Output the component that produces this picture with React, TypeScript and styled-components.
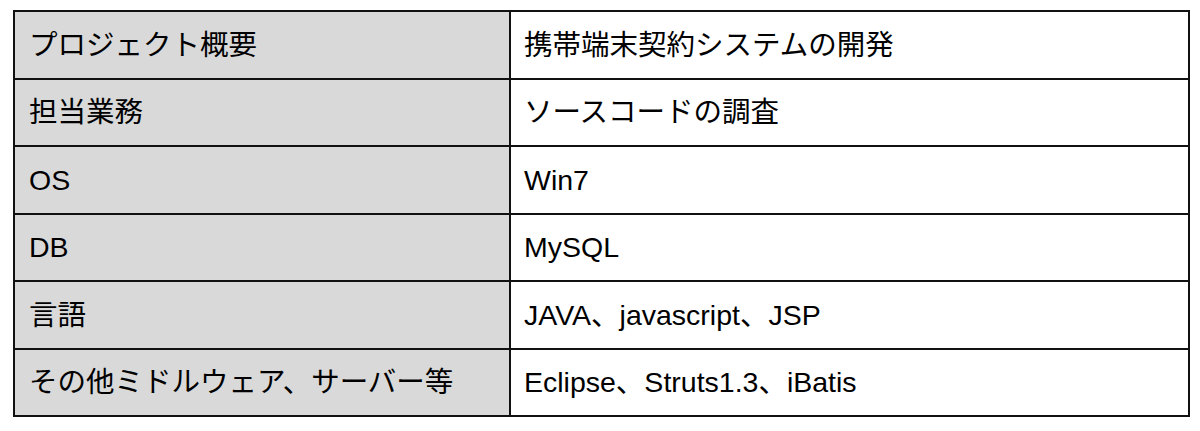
import React from "react";
import styled, { createGlobalStyle } from "styled-components";

const GlobalStyle = createGlobalStyle`
  html, body {
    margin: 0;
    padding: 0;
    background: #ffffff;
  }
  body {
    font-family: "Liberation Sans", "Noto Sans CJK JP", sans-serif;
  }
`;

const Page = styled.div`
  padding: 10px 0 0 13px;
`;

const Table = styled.table`
  border-collapse: collapse;
  width: 1177px;
  border: 2px solid #111;
  table-layout: fixed;
`;

const HeadCol = styled.col`
  width: 496px;
`;

const Row = styled.tr`
  height: 67.5px;
`;

const Cell = styled.td<{ $head?: boolean }>`
  border: 2px solid #111;
  padding: 0 0 0 ${(p) => (p.$head ? "14px" : "13px")};
  background: ${(p) => (p.$head ? "#d9d9d9" : "#ffffff")};
  color: #000;
  font-family: "Liberation Sans", "Noto Sans CJK JP", sans-serif;
  font-size: 28.5px;
  line-height: 1;
  vertical-align: middle;
  white-space: nowrap;
`;

const rows: [string, string][] = [
  ["プロジェクト概要", "携帯端末契約システムの開発"],
  ["担当業務", "ソースコードの調査"],
  ["OS", "Win7"],
  ["DB", "MySQL"],
  ["言語", "JAVA、javascript、JSP"],
  ["その他ミドルウェア、サーバー等", "Eclipse、Struts1.3、iBatis"],
];

export default function App() {
  return (
    <>
      <GlobalStyle />
      <Page>
        <Table>
          <colgroup>
            <HeadCol />
            <col />
          </colgroup>
          <tbody>
            {rows.map(([k, v]) => (
              <Row key={k}>
                <Cell $head>{k}</Cell>
                <Cell>{v}</Cell>
              </Row>
            ))}
          </tbody>
        </Table>
      </Page>
    </>
  );
}
